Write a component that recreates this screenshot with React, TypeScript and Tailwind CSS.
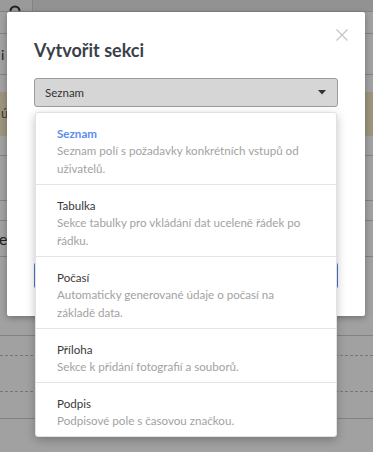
import React from 'react';

type SectionType = {
  id: string;
  title: string;
  description: string;
};

const sectionTypes: SectionType[] = [
  {
    id: 'list',
    title: 'Seznam',
    description: 'Seznam polí s požadavky konkrétních vstupů od uživatelů.',
  },
  {
    id: 'table',
    title: 'Tabulka',
    description: 'Sekce tabulky pro vkládání dat uceleně řádek po řádku.',
  },
  {
    id: 'weather',
    title: 'Počasí',
    description: 'Automaticky generované údaje o počasí na základě data.',
  },
  {
    id: 'attachment',
    title: 'Příloha',
    description: 'Sekce k přidání fotografií a souborů.',
  },
  {
    id: 'signature',
    title: 'Podpis',
    description: 'Podpisové pole s časovou značkou.',
  },
];

const SearchIcon = () => (
  <svg width="14" height="14" viewBox="0 0 14 14" fill="none">
    <circle cx="6" cy="6" r="4.5" stroke="#333" strokeWidth="2" />
    <path d="M9.5 9.5L13 13" stroke="#333" strokeWidth="2" strokeLinecap="round" />
  </svg>
);

// Page that sits underneath the modal overlay
const BackgroundPage = () => (
  <div className="flex flex-col w-full h-full bg-white">
    <div className="flex h-[12px] border-b border-[#d0d0d0]">
      <div className="w-[33px] h-full bg-[#f4f4f4] border-r border-[#d0d0d0] flex justify-center items-end overflow-hidden">
        <div className="-mb-[8px]">
          <SearchIcon />
        </div>
      </div>
      <div className="flex-1 bg-[#e8e8e8]" />
    </div>
    <div className="h-[22px] border-b border-[#cfcfcf]" />
    <div className="h-[41px] border-b border-[#cfcfcf] flex items-center text-[14px] text-[#333]">
      <span className="pl-[1px]">i</span>
    </div>
    <div className="h-[17px]" />
    <div className="h-[44px] bg-[#f7ebc6] flex items-center text-[13px] text-[#555]">
      <span className="ml-[1px]">ú</span>
    </div>
    <div className="h-[20px] border-b border-[#cfcfcf]" />
    <div className="h-[45px] border-b border-[#cfcfcf]" />
    <div className="h-[20px] border-b border-[#cfcfcf]" />
    <div className="h-[36px] border-b border-[#cfcfcf] flex items-center text-[16px] text-[#333]">
      <span className="-ml-[1px]">e</span>
    </div>
    <div className="h-[79px] border-b border-[#cfcfcf]" />
    <div className="h-[20px] border-b border-dashed border-[#bdbdbd]" />
    <div className="h-[36px] border-b border-dashed border-[#bdbdbd]" />
    <div className="h-[27px] border-b border-[#cfcfcf]" />
    <div className="flex-1" />
  </div>
);

const CaretDown = () => (
  <svg width="8" height="5" viewBox="0 0 8 5">
    <path d="M0 0H8L4 4.5Z" fill="#333" />
  </svg>
);

const CloseIcon = () => (
  <svg width="12" height="12" viewBox="0 0 12 12" fill="none">
    <path d="M0.5 0.5L11.5 11.5M11.5 0.5L0.5 11.5" stroke="#c4c4c4" strokeWidth="1.2" />
  </svg>
);

export default function App() {
  const [selected, setSelected] = React.useState('list');

  return (
    <div
      className="relative w-[373px] h-[452px] overflow-hidden"
      style={{ fontFamily: 'Lato, "Open Sans", sans-serif' }}
    >
      <BackgroundPage />

      {/* Overlay */}
      <div className="absolute inset-0 bg-black/[0.37]" />

      {/* Modal */}
      <div className="absolute left-[7px] top-[12px] w-[358px] h-[304px] bg-white rounded-[2px] shadow-[0_2px_6px_rgba(0,0,0,0.3)]">
        <button className="absolute right-[17px] top-[17px]">
          <CloseIcon />
        </button>
        <div className="pl-[27px] pr-[27px] pt-[24px]">
          <h2 className="text-[18px] font-bold text-[#3b3f4a] leading-[28px]">
            Vytvořit sekci
          </h2>
          <div className="mt-[14px] h-[29px] rounded-[3px] border border-[#9c9c9c] bg-[#d6d6d6] flex items-center justify-between pl-[10px] pr-[11px]">
            <span className="text-[11.5px] text-[#333]">Seznam</span>
            <CaretDown />
          </div>
          <div className="mt-[155px] h-[27px] rounded-[3px] border border-[#4f73d4]" />
        </div>
      </div>

      {/* Dropdown menu */}
      <div className="absolute left-[35px] top-[112px] w-[302px] bg-white rounded-[3px] border border-[#e2e2e2] shadow-[0_3px_10px_rgba(0,0,0,0.25)] flex flex-col">
        {sectionTypes.map((item, i) => (
          <button
            key={item.id}
            onClick={() => setSelected(item.id)}
            className={`text-left pl-[21px] pr-[22px] pt-[12px] pb-[6px] ${
              i > 0 ? 'border-t border-[#e4e4e4]' : ''
            }`}
          >
            <div
              className={`text-[11.6px] leading-[17px] ${
                selected === item.id ? 'text-[#5b8def] font-bold' : 'text-[#3a3a3a]'
              }`}
            >
              {item.title}
            </div>
            <div className="text-[11.6px] leading-[18px] text-[#a2a2a2]">
              {item.description}
            </div>
          </button>
        ))}
      </div>
    </div>
  );
}
